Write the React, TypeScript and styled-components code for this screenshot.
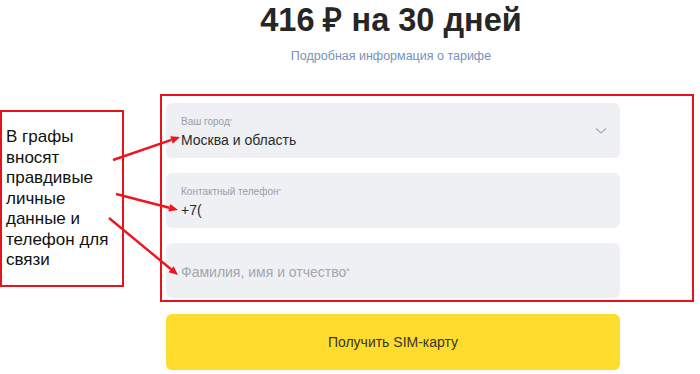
import React, { ReactElement } from 'react';
import styled, { createGlobalStyle } from 'styled-components';

const GlobalStyle = createGlobalStyle`
  html, body {
    margin: 0;
    padding: 0;
    background: #ffffff;
    font-family: "Liberation Sans", Arial, sans-serif;
  }
`;

const Page = styled.div`
  position: relative;
  width: 700px;
  height: 374px;
  overflow: hidden;
  display: flex;
  align-items: flex-start;
  gap: 36px;
`;

const NoteBox = styled.div`
  margin-top: 110px;
  width: 124px;
  height: 177px;
  box-sizing: border-box;
  border: 2px solid #e8121b;
  padding: 15px 0 0 4px;
  font-size: 17px;
  line-height: 20.5px;
  color: #111;
`;

const Main = styled.div`
  width: 534px;
  display: flex;
  flex-direction: column;
`;

const Head = styled.div`
  width: 462px;
  display: flex;
  flex-direction: column;
  align-items: center;
`;

const Title = styled.h1`
  margin: 2px 0 0;
  font-size: 32.5px;
  line-height: 37px;
  font-weight: bold;
  color: #262626;
`;

const TariffLink = styled.a`
  margin-top: 9px;
  font-size: 12.5px;
  line-height: 16px;
  color: #7593bd;
  text-decoration: none;
`;

const FormFrame = styled.div`
  margin-top: 30px;
  box-sizing: border-box;
  border: 2px solid #e8121b;
  padding: 7px 72px 2px 4px;
  display: flex;
  flex-direction: column;
  gap: 15px;
`;

const Field = styled.div`
  position: relative;
  height: 55px;
  box-sizing: border-box;
  border-radius: 6px;
  background: #eef0f4;
  padding: 4px 15px 0;
  display: flex;
  flex-direction: column;
  justify-content: center;
`;

const Label = styled.span`
  font-size: 10px;
  line-height: 12px;
  color: #9a9ea6;
`;

const Value = styled.span<{ $muted?: boolean }>`
  margin-top: ${({ $muted }): string => ($muted ? '0' : '4px')};
  font-size: 14px;
  line-height: 17px;
  color: ${({ $muted }): string => ($muted ? '#a3a7ae' : '#2b2b2b')};
`;

const Star = styled.sup`
  font-size: 0.6em;
  vertical-align: top;
  position: relative;
  top: -1px;
`;

const Chevron = styled.svg`
  position: absolute;
  right: 13px;
  top: 24px;
`;

const SubmitButton = styled.button`
  margin: 12px 0 0 6px;
  width: 454px;
  height: 56px;
  border: none;
  border-radius: 6px;
  background: #fedc2e;
  font-family: "Liberation Sans", Arial, sans-serif;
  font-size: 14px;
  color: #3a3428;
  cursor: pointer;
`;

const Arrows = styled.svg`
  position: absolute;
  left: 0;
  top: 0;
  pointer-events: none;
`;

function Arrow({ x1, y1, x2, y2 }: { x1: number; y1: number; x2: number; y2: number }): ReactElement {
  const a = Math.atan2(y2 - y1, x2 - x1);
  const len = 9;
  const w = 4;
  const bx = x2 - len * Math.cos(a);
  const by = y2 - len * Math.sin(a);
  const px = -Math.sin(a) * w;
  const py = Math.cos(a) * w;
  return (
    <g>
      <line x1={x1} y1={y1} x2={bx} y2={by} stroke="#ec1520" strokeWidth={2.4} />
      <polygon points={`${x2},${y2} ${bx + px},${by + py} ${bx - px},${by - py}`} fill="#ec1520" />
    </g>
  );
}

export default function App(): ReactElement {
  return (
    <>
      <GlobalStyle />
      <Page>
        <NoteBox>
          В графы<br />
          вносят<br />
          правдивые<br />
          личные<br />
          данные и<br />
          телефон для<br />
          связи
        </NoteBox>
        <Main>
          <Head>
            <Title>416 ₽ на 30 дней</Title>
            <TariffLink href="#">Подробная информация о тарифе</TariffLink>
          </Head>
          <FormFrame>
            <Field>
              <Label>Ваш город<Star>*</Star></Label>
              <Value>Москва и область</Value>
              <Chevron width="12" height="8" viewBox="0 0 12 8">
                <path d="M1 1.5 L6 6 L11 1.5" fill="none" stroke="#a8acb3" strokeWidth="1.3" />
              </Chevron>
            </Field>
            <Field>
              <Label>Контактный телефон<Star>*</Star></Label>
              <Value>+7(</Value>
            </Field>
            <Field>
              <Value $muted>Фамилия, имя и отчество<Star>*</Star></Value>
            </Field>
          </FormFrame>
          <SubmitButton>Получить SIM-карту</SubmitButton>
        </Main>
        <Arrows width="700" height="374" viewBox="0 0 700 374">
          <Arrow x1={113} y1={160} x2={180} y2={137} />
          <Arrow x1={116} y1={194} x2={178} y2={210} />
          <Arrow x1={109} y1={218} x2={178} y2={275} />
        </Arrows>
      </Page>
    </>
  );
}
